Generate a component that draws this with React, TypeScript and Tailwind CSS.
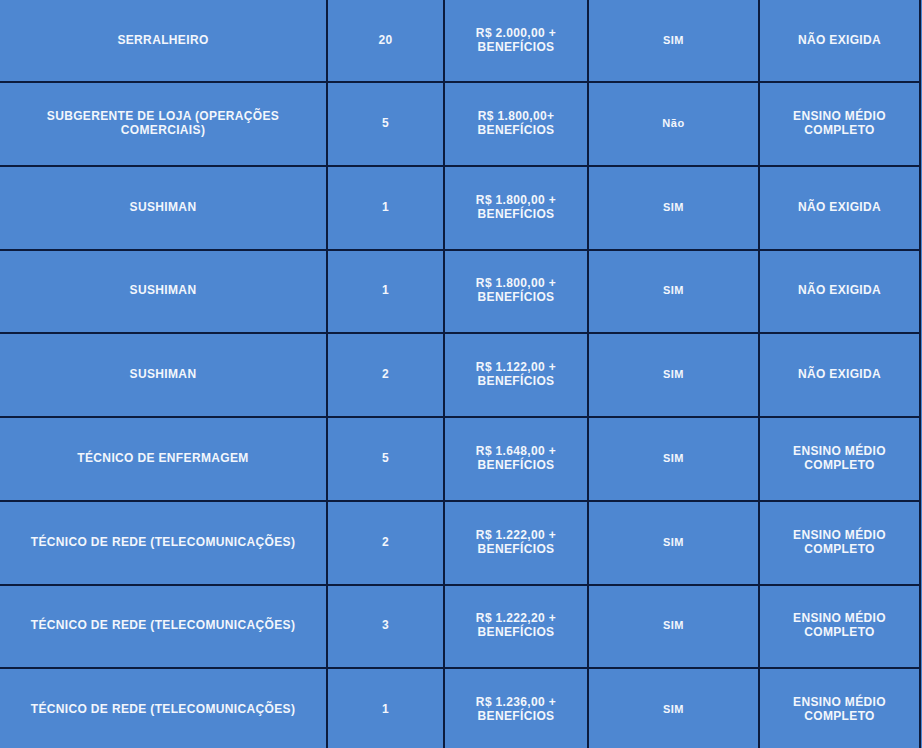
const rows: {
  cargo: string[];
  vagas: string;
  salario: string[];
  exp: string;
  escolaridade: string[];
}[] = [
  { cargo: ["SERRALHEIRO"], vagas: "20", salario: ["R$ 2.000,00 +", "BENEFÍCIOS"], exp: "SIM", escolaridade: ["NÃO EXIGIDA"] },
  { cargo: ["SUBGERENTE DE LOJA (OPERAÇÕES", "COMERCIAIS)"], vagas: "5", salario: ["R$ 1.800,00+", "BENEFÍCIOS"], exp: "Não", escolaridade: ["ENSINO MÉDIO", "COMPLETO"] },
  { cargo: ["SUSHIMAN"], vagas: "1", salario: ["R$ 1.800,00 +", "BENEFÍCIOS"], exp: "SIM", escolaridade: ["NÃO EXIGIDA"] },
  { cargo: ["SUSHIMAN"], vagas: "1", salario: ["R$ 1.800,00 +", "BENEFÍCIOS"], exp: "SIM", escolaridade: ["NÃO EXIGIDA"] },
  { cargo: ["SUSHIMAN"], vagas: "2", salario: ["R$ 1.122,00 +", "BENEFÍCIOS"], exp: "SIM", escolaridade: ["NÃO EXIGIDA"] },
  { cargo: ["TÉCNICO DE ENFERMAGEM"], vagas: "5", salario: ["R$ 1.648,00 +", "BENEFÍCIOS"], exp: "SIM", escolaridade: ["ENSINO MÉDIO", "COMPLETO"] },
  { cargo: ["TÉCNICO DE REDE (TELECOMUNICAÇÕES)"], vagas: "2", salario: ["R$ 1.222,00 +", "BENEFÍCIOS"], exp: "SIM", escolaridade: ["ENSINO MÉDIO", "COMPLETO"] },
  { cargo: ["TÉCNICO DE REDE (TELECOMUNICAÇÕES)"], vagas: "3", salario: ["R$ 1.222,20 +", "BENEFÍCIOS"], exp: "SIM", escolaridade: ["ENSINO MÉDIO", "COMPLETO"] },
  { cargo: ["TÉCNICO DE REDE (TELECOMUNICAÇÕES)"], vagas: "1", salario: ["R$ 1.236,00 +", "BENEFÍCIOS"], exp: "SIM", escolaridade: ["ENSINO MÉDIO", "COMPLETO"] },
];

function Cell({ lines, small }: { lines: string[]; small?: boolean }) {
  return (
    <div
      className={`flex flex-col items-center justify-center bg-[#4e87d1] pb-[2px] text-center font-bold text-[#f2f6fc] ${
        small ? "text-[11px] tracking-[0.5px]" : "text-[12px] tracking-[0.35px]"
      } leading-[14px]`}
    >
      {lines.map((l, i) => (
        <span key={i} className="whitespace-nowrap">
          {l}
        </span>
      ))}
    </div>
  );
}

export default function App() {
  return (
    <div
      className="h-[748px] w-[922px] overflow-hidden bg-[#4e87d1]"
      style={{ fontFamily: '"Liberation Sans", Arial, sans-serif' }}
    >
      <div className="grid w-[921px] grid-cols-[326px_115px_142px_169px_159px] grid-rows-[81px_repeat(8,81.75px)] gap-[2px] border-r-2 border-b-2 border-[#0c1b3d] bg-[#0c1b3d]">
        {rows.map((r, i) => (
          <div key={i} className="contents">
            <Cell lines={r.cargo} />
            <Cell lines={[r.vagas]} />
            <Cell lines={r.salario} />
            <Cell lines={[r.exp]} small />
            <Cell lines={r.escolaridade} />
          </div>
        ))}
      </div>
    </div>
  );
}
